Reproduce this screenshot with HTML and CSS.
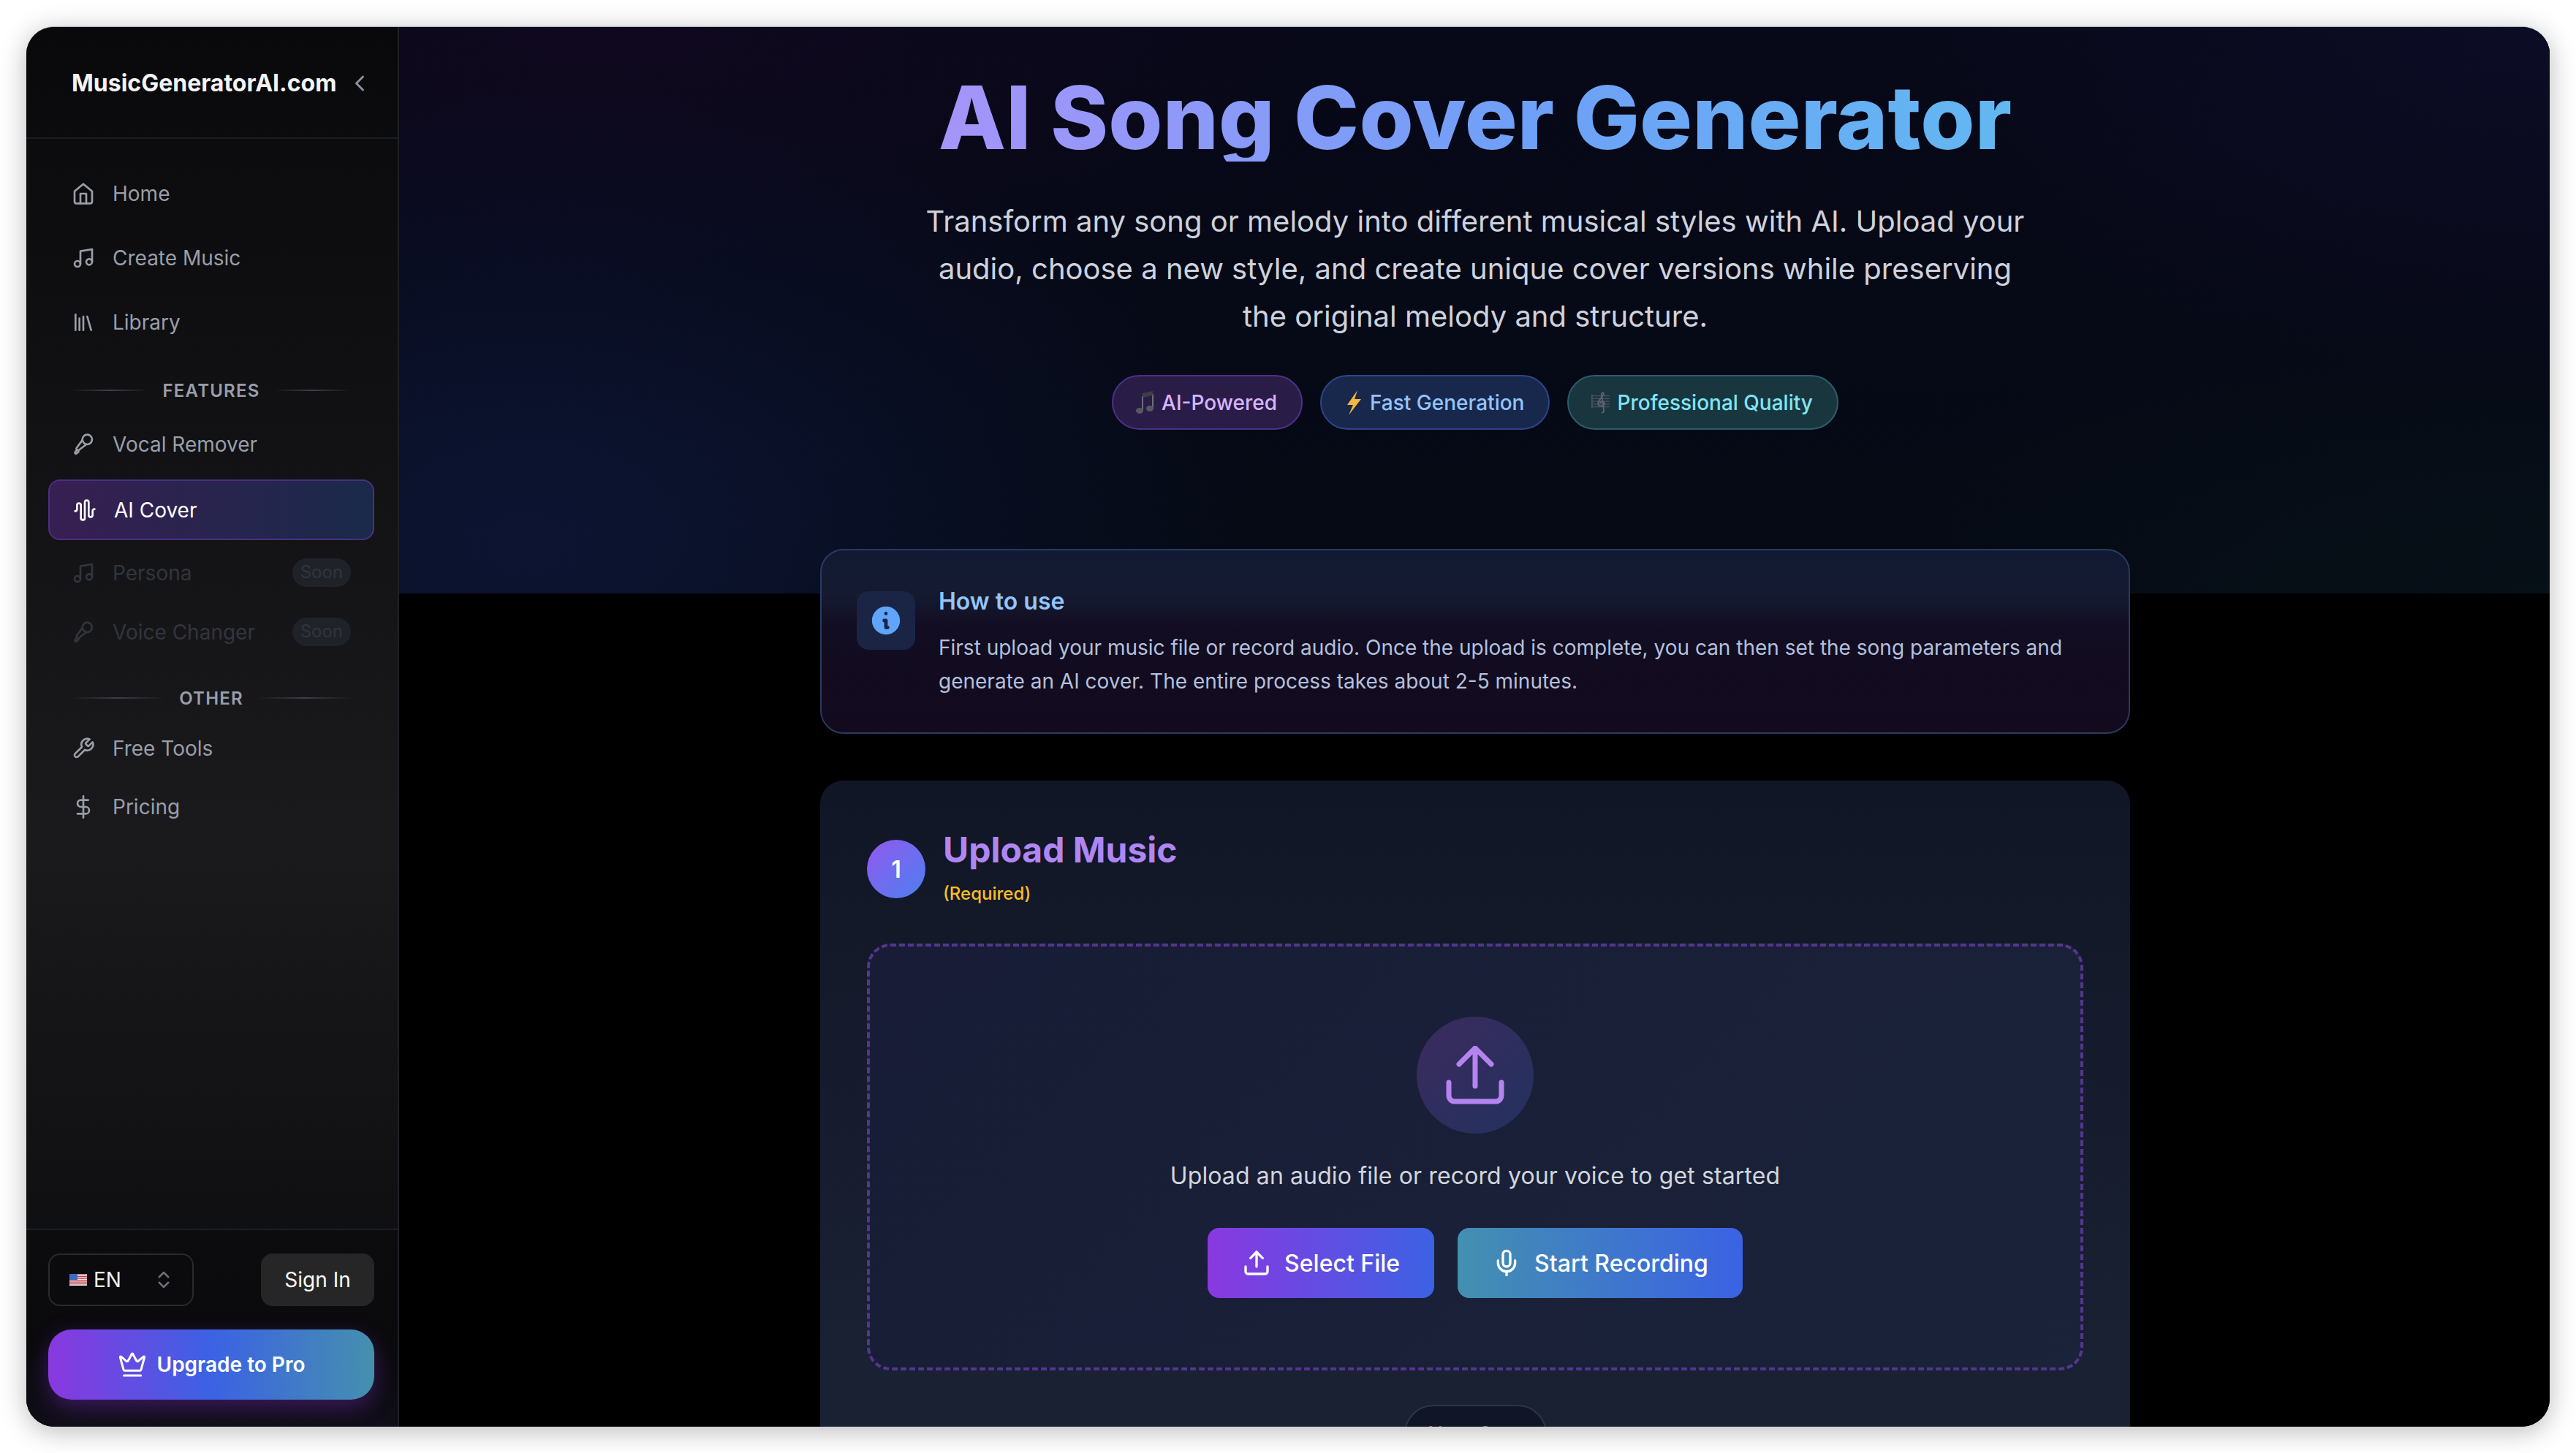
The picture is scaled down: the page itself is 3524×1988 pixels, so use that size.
FILE: index.html

```html
<!DOCTYPE html>
<html lang="en">
<head>
  <meta charset="UTF-8" />
  <title>AI Song Cover Generator</title>
  <link rel="stylesheet" href="styles.css">
</head>
<body>

<svg class="sprite" width="0" height="0">
  <symbol id="i-music" viewBox="0 0 24 24"><path d="M9 18V5l12-2v13"/><circle cx="6" cy="18" r="3"/><circle cx="18" cy="16" r="3"/></symbol>
  <symbol id="i-mic-vocal" viewBox="0 0 24 24"><path d="m11 7.6-6 8.2a1 1 0 0 0 .1 1.3l.8.8a1 1 0 0 0 1.3.1L15.1 12"/><path d="M5.5 17.5 3.6 20a1 1 0 0 0 .1 1.300a1 1 0 0 0 1.300.1l2.200-1.900"/><circle cx="16" cy="7" r="5"/></symbol>
  <symbol id="i-upload" viewBox="0 0 24 24"><path d="M21 15v4a2 2 0 0 1-2 2H5a2 2 0 0 1-2-2v-4"/><path d="M17 8l-5-5-5 5"/><path d="M12 3v12"/></symbol>
</svg>

<div class="window">

  <aside class="sidebar">
    <div class="side-head">
      <span class="logo">MusicGeneratorAI.com</span>
      <svg class="ico chevron" viewBox="0 0 24 24"><path d="m15 18-6-6 6-6"/></svg>
    </div>

    <nav class="side-nav">
      <a class="item item-top">
        <svg class="ico" viewBox="0 0 24 24"><path d="M3 9.500 12 2l9 7.500V20a2 2 0 0 1-2 2H5a2 2 0 0 1-2-2z"/><path d="M9 22V12h6v10"/></svg>
        Home
      </a>
      <a class="item item-top">
        <svg class="ico"><use href="#i-music"/></svg>
        Create Music
      </a>
      <a class="item item-top">
        <svg class="ico" viewBox="0 0 24 24"><path d="m16 6 4 14"/><path d="M12 6v14"/><path d="M8 8v12"/><path d="M4 4v16"/></svg>
        Library
      </a>

      <div class="side-label label-features"><span>FEATURES</span></div>
      <a class="item">
        <svg class="ico"><use href="#i-mic-vocal"/></svg>
        Vocal Remover
      </a>
      <a class="item active">
        <svg class="ico" viewBox="0 0 24 24"><path d="M2 13a2 2 0 0 0 2-2V7a2 2 0 0 1 4 0v13a2 2 0 0 0 4 0V4a2 2 0 0 1 4 0v13a2 2 0 0 0 4 0v-4a2 2 0 0 1 2-2"/></svg>
        AI Cover
      </a>
      <a class="item disabled">
        <svg class="ico"><use href="#i-music"/></svg>
        Persona
        <span class="soon">Soon</span>
      </a>
      <a class="item disabled">
        <svg class="ico"><use href="#i-mic-vocal"/></svg>
        Voice Changer
        <span class="soon">Soon</span>
      </a>

      <div class="side-label label-other"><span>OTHER</span></div>
      <a class="item">
        <svg class="ico" viewBox="0 0 24 24"><path d="M14.700 6.300a1 1 0 0 0 0 1.400l1.600 1.600a1 1 0 0 0 1.400 0l3.770-3.770a6 6 0 0 1-7.940 7.940l-6.910 6.910a2.120 2.120 0 0 1-3-3l6.910-6.910a6 6 0 0 1 7.940-7.940l-3.760 3.760z"/></svg>
        Free Tools
      </a>
      <a class="item">
        <svg class="ico" viewBox="0 0 24 24"><path d="M12 1v22"/><path d="M17 5H9.500a3.500 3.500 0 0 0 0 7h5a3.500 3.500 0 0 1 0 7H6"/></svg>
        Pricing
      </a>
    </nav>

    <div class="side-foot">
      <div class="foot-row">
        <div class="lang">
          <svg class="flag" viewBox="0 0 24 16">
            <rect width="24" height="16" fill="#e8eaf0"/>
            <path d="M0 1.200h24M0 3.700h24M0 6.200h24M0 8.700h24M0 11.200h24M0 13.700h24" stroke="#c9404a" stroke-width="1.250"/>
            <rect width="11" height="8.500" fill="#3c6cc0"/>
          </svg>
          <span>EN</span>
          <svg class="ico updown" viewBox="0 0 24 24"><path d="m7 15 5 5 5-5"/><path d="m7 9 5-5 5 5"/></svg>
        </div>
        <button class="signin">Sign In</button>
      </div>
      <button class="upgrade">
        <svg class="ico" viewBox="0 0 24 24"><path d="M11.560 3.270a.5.5 0 0 1 .88 0L15.390 8.870a1 1 0 0 0 1.520.29L21.180 5.500a.5.5 0 0 1 .8.52l-2.830 10.250a1 1 0 0 1-.96.73H5.810a1 1 0 0 1-.96-.73L2.020 6.020a.5.5 0 0 1 .8-.52l4.280 3.660a1 1 0 0 0 1.520-.29z"/><path d="M5 21h14"/></svg>
        Upgrade to Pro
      </button>
    </div>
  </aside>

  <main class="main">
    <section class="hero">
      <h1>AI Song Cover Generator</h1>
      <p>Transform any song or melody into different musical styles with AI. Upload your audio, choose a new style, and create unique cover versions while preserving the original melody and structure.</p>
      <div class="pills">
        <span class="pill pill-purple">
          <svg class="emoji" viewBox="0 0 28 34"><path d="M10 8v20M24 5v20" stroke="#6b6f78" stroke-width="2" fill="none"/><path d="M10 4 24 1v6L10 10z" fill="#3c3f47"/><ellipse cx="6" cy="28" rx="5" ry="4" fill="#565963"/><ellipse cx="20" cy="25" rx="5" ry="4" fill="#565963"/></svg>
          AI-Powered
        </span>
        <span class="pill pill-blue">
          <svg class="emoji" viewBox="0 0 28 34"><path d="M19 0 5 20h8L7 34 24 12h-9z" fill="#f5b83d"/></svg>
          Fast Generation
        </span>
        <span class="pill pill-cyan">
          <svg class="emoji" viewBox="0 0 30 34"><path d="M2 7h26M2 11h26M2 15h26M2 19h26M2 23h26" stroke="#4b5058" stroke-width="1.500"/><path d="M2 5v20" stroke="#4b5058" stroke-width="2"/><path d="M16 31c3 1 4-1 3-5L16 5c0-3 3-4 3-1 0 4-9 9-8 15 1 4 9 4 9-1 0-4-6-4-6 0" stroke="#5e636c" stroke-width="2" fill="none"/></svg>
          Professional Quality
        </span>
      </div>
    </section>

    <div class="content">
      <section class="howto">
        <div class="howto-icon">
          <svg viewBox="0 0 20 20"><path fill-rule="evenodd" d="M18 10a8 8 0 11-16 0 8 8 0 0116 0zm-7-4a1 1 0 11-2 0 1 1 0 012 0zM9 9a1 1 0 000 2v3a1 1 0 001 1h1a1 1 0 100-2v-3a1 1 0 00-1-1H9z"/></svg>
        </div>
        <div class="howto-text">
          <h3>How to use</h3>
          <p>First upload your music file or record audio. Once the upload is complete, you can then set the song parameters and generate an AI cover. The entire process takes about 2-5 minutes.</p>
        </div>
      </section>

      <section class="step-card">
        <div class="step-head">
          <span class="step-num">1</span>
          <div>
            <h2>Upload Music</h2>
            <small>(Required)</small>
          </div>
        </div>

        <div class="dropzone">
          <div class="drop-circle">
            <svg viewBox="0 0 80 80"><path d="M40 55V3M18 25 40 3l22 22M4 50v18a8 8 0 0 0 8 8h56a8 8 0 0 0 8-8V50"/></svg>
          </div>
          <p>Upload an audio file or record your voice to get started</p>
          <div class="drop-btns">
            <button class="btn btn-select">
              <svg class="ico"><use href="#i-upload"/></svg>
              Select File
            </button>
            <button class="btn btn-record">
              <svg class="ico" viewBox="0 0 24 24"><path d="M12 2a3 3 0 0 0-3 3v7a3 3 0 0 0 6 0V5a3 3 0 0 0-3-3Z"/><path d="M19 10v2a7 7 0 0 1-14 0v-2"/><path d="M12 19v3"/></svg>
              Start Recording
            </button>
          </div>
        </div>

        <div class="next-wrap"><button class="next">Next Step</button></div>
      </section>
    </div>
  </main>

</div>

</body>
</html>
```

FILE: styles.css

```css
* { box-sizing: border-box; }
html, body { height: 100%; }
body { margin: 0; padding: 36px; background: #fff; font-family: Inter, "Noto Sans", sans-serif; overflow: hidden; }
h1, h2, h3, p { margin: 0; }
button { font-family: inherit; border: none; cursor: pointer; }
.sprite { position: absolute; }

.ico { width: 32px; height: 32px; fill: none; stroke: currentColor; stroke-width: 2; stroke-linecap: round; stroke-linejoin: round; flex: none; }
use { fill: none; stroke: currentColor; }

.window {
  display: flex; height: 100%; overflow: hidden; background: #000;
  border-top: 1px solid #aab6c6; border-radius: 38px;
  box-shadow: 0 6px 36px rgba(0, 0, 0, .28);
}

/* sidebar */
.sidebar {
  width: 510px; flex: none; display: flex; flex-direction: column;
  background: linear-gradient(180deg, #09090b 0%, #1a1a1c 58%, #0a0a0c 100%);
  border-right: 2px solid #1e2026;
}
.side-head { height: 153px; flex: none; display: flex; align-items: flex-start; justify-content: space-between; padding: 59px 34px 0 62px; border-bottom: 2px solid #1a1d23; }
.logo { font-size: 32px; font-weight: 700; color: #f4f4f6; line-height: 36px; }
.chevron { width: 36px; height: 36px; color: #8d919b; }

.side-nav { flex: 1; padding: 35px 32px 0 30px; }
.item { display: flex; align-items: center; gap: 24px; height: 80px; padding: 0 32px; font-size: 28px; color: #9a9ea9; }
.item-top { margin-bottom: 8px; }
.item.active { height: 83px; margin: 8px 0 4px; border: 2px solid #4c2f83; border-radius: 16px; color: #fff; background: linear-gradient(90deg, #371f52, #1a2a4a); }
.item.disabled { color: #32353d; height: 81px; }
.soon { margin-left: auto; height: 39px; line-height: 38px; padding: 0 11px; font-size: 24px; color: #32353d; background: #1f2228; border-radius: 20px; }

.side-label { display: flex; align-items: center; gap: 20px; padding: 0 32px; height: 40px; font-size: 24px; font-weight: 600; letter-spacing: 1.200px; color: #9a9ea9; }
.side-label::before, .side-label::after { content: ""; flex: 1; height: 2px; background: linear-gradient(90deg, transparent, #3b4049, transparent); }
.label-features { margin: 33px 0 14px; }
.label-other { margin: 30px 0 9px; }

.side-foot { flex: none; height: 271px; padding: 32px 32px 0 30px; border-top: 2px solid #1a1f26; background: linear-gradient(180deg, #0c0c0e, #0a0a0c 60%, #100e18); }
.foot-row { display: flex; justify-content: space-between; margin-bottom: 32px; }
.lang { display: flex; align-items: center; width: 199px; height: 72px; padding: 0 27px; font-size: 28px; color: #f1f1f3; background: #0b0b0d; border: 2px solid #2a2a2d; border-radius: 16px; }
.flag { width: 24px; height: 16px; margin-right: 9px; flex: none; }
.updown { width: 30px; height: 30px; margin-left: auto; margin-right: -3px; color: #6e7079; }
.signin { width: 155px; height: 72px; font-size: 28px; color: #fafafa; background: #262626; border-radius: 16px; }
.upgrade {
  display: flex; align-items: center; justify-content: center; gap: 14px; width: 100%; height: 96px;
  font-size: 28px; font-weight: 600; color: #fff; border-radius: 32px;
  background: linear-gradient(90deg, #8a38e0, #3b62e4 50%, #4590ae);
  box-shadow: 0 10px 30px rgba(147, 51, 234, .35);
}
.upgrade .ico { width: 40px; height: 40px; stroke-width: 1.800; }

/* main */
.main {
  flex: 1; min-width: 0; overflow: hidden; padding-left: 2px;
  background-color: #000;
  background-image:
    radial-gradient(ellipse 1000px 620px at 6% 90%, rgba(24, 38, 100, .38), transparent),
    radial-gradient(ellipse 1000px 380px at 10% 0%, rgba(36, 8, 46, .3), transparent),
    radial-gradient(ellipse 900px 500px at 100% 0%, rgba(24, 20, 64, .35), transparent),
    radial-gradient(ellipse 1000px 400px at 100% 100%, rgba(10, 30, 30, .3), transparent),
    linear-gradient(#070818, #050a14);
  background-size: 100% 775px;
  background-repeat: no-repeat;
}
.hero { padding-top: 64px; text-align: center; }
.hero h1 {
  display: inline-block; font-size: 120px; line-height: 120px; font-weight: 800; letter-spacing: .1px;
  background: linear-gradient(90deg, #a594f9, #6ea0f7 55%, #62b8f1);
  -webkit-background-clip: text; background-clip: text; color: transparent;
}
.hero p { width: 1536px; margin: 49px auto 0; font-size: 40px; line-height: 65px; color: #cdd2dc; }
.pills { display: flex; justify-content: center; gap: 24px; margin-top: 48px; }
.pill { display: flex; align-items: center; gap: 8px; height: 75px; padding: 0 33px 0 30px; font-size: 28px; font-weight: 500; border: 2px solid; border-radius: 38px; }
.emoji { width: 28px; height: 34px; flex: none; }
.pill-purple { color: #d8b4fe; background: #291d47; border-color: #4a3185; }
.pill-blue { color: #93c5fd; background: #18284c; border-color: #2b4689; }
.pill-cyan { color: #7fe6f5; background: #19363f; border-color: #2a5e6e; }

.content { width: 1792px; margin: 163px auto 0; }
.howto {
  display: flex; gap: 32px; height: 253px; padding: 56px 48px;
  border: 2px solid #2a3a60; border-radius: 32px;
  background: linear-gradient(180deg, #111a33 0%, #151a30 25%, #120d22 42%, #130a1e 100%);
}
.howto-icon { width: 80px; height: 80px; flex: none; display: flex; align-items: center; justify-content: center; background: #1a2545; border-radius: 16px; }
.howto-icon svg { width: 48px; height: 48px; fill: #60a5fa; }
.howto-text { margin-top: -8px; }
.howto h3 { font-size: 32px; line-height: 44px; font-weight: 600; color: #93c5fd; }
.howto p { margin-top: 18px; font-size: 28px; line-height: 46px; color: #b3c0dc; }

.step-card { margin-top: 64px; height: 1000px; padding: 64px; border-radius: 32px 32px 0 0; background: linear-gradient(180deg, #111626, #1a2133 80%); }
.step-head { display: flex; align-items: center; gap: 24px; height: 96px; margin-top: 16px; }
.step-num { width: 80px; height: 80px; flex: none; display: flex; align-items: center; justify-content: center; font-size: 32px; font-weight: 600; color: #fff; border-radius: 50%; background: linear-gradient(135deg, #9259ef, #4c7ff0); margin-top: -14px; }
.step-head h2 { font-size: 48px; line-height: 56px; font-weight: 700; color: #af86f3; margin-top: -18px; }
.step-head small { display: block; margin-top: 16px; font-size: 24px; line-height: 32px; font-weight: 500; color: #fbbf24; }

.dropzone { height: 584px; margin-top: 47px; padding-top: 96px; text-align: center; border: 4px dashed #54368f; border-radius: 32px; background: linear-gradient(135deg, #181c36, #1a2339); }
.drop-circle { width: 160px; height: 160px; margin: 0 auto; display: flex; align-items: center; justify-content: center; border-radius: 50%; background: linear-gradient(135deg, #3c2b5e, #22315e); }
.drop-circle svg { width: 80px; height: 80px; fill: none; stroke: #b584f1; stroke-width: 7; stroke-linecap: round; stroke-linejoin: round; }
.dropzone p { margin-top: 36px; font-size: 32px; line-height: 44px; letter-spacing: .12px; color: #d1d5db; }
.drop-btns { display: flex; justify-content: center; gap: 32px; margin-top: 49px; }
.btn { display: flex; align-items: center; gap: 18px; height: 96px; padding: 0 47px; font-size: 32px; font-weight: 500; color: #fff; border-radius: 16px; }
.btn .ico { width: 40px; height: 40px; }
.btn-select { background: linear-gradient(90deg, #8a38e0, #3b62e4); }
.btn-record { background: linear-gradient(90deg, #4390b0, #3b62e4); }

.next-wrap { display: flex; justify-content: center; margin-top: 47px; }
.next { width: 195px; height: 80px; font-size: 28px; color: #7b8090; background: #111528; border: 2px solid #2e3547; border-radius: 40px; }
```
